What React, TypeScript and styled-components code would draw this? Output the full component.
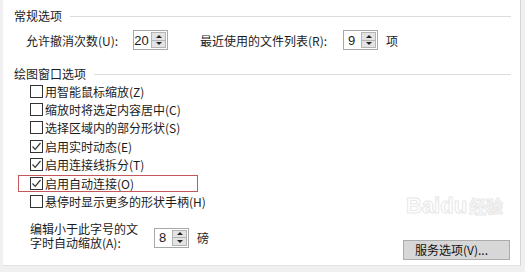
import { FC } from "react";
import styled, { createGlobalStyle } from "styled-components";

const GlobalStyle = createGlobalStyle`
	html, body {
		margin: 0;
		padding: 0;
		background: #f0f0f0;
	}
	body {
		font-family: "Noto Sans CJK SC", "Noto Sans", sans-serif;
		font-size: 12px;
		color: #1b1b1b;
	}
`;

const Page = styled.div`
	width: 525px;
	height: 272px;
	background: #f0f0f0;
	overflow: hidden;
	position: relative;
`;

const Panel = styled.div`
	margin-left: 3px;
	width: 518px;
	height: 266px;
	box-sizing: border-box;
	background: #fff;
	border-right: 1px solid #d5d5d5;
	border-bottom: 1px solid #e2e2e2;
	padding: 7px 9px 0 11px;
`;

const GroupHeader = styled.div<{ $top?: number }>`
	display: flex;
	align-items: center;
	height: 18px;
	margin-top: ${(p) => p.$top ?? 0}px;
	line-height: 18px;
	span {
		white-space: nowrap;
		padding-right: 8px;
	}
	&::after {
		content: "";
		flex: 1;
		height: 1px;
		background: #dcdcdc;
	}
`;

const SpinRow = styled.div`
	display: flex;
	align-items: center;
	height: 20px;
	margin-top: 5px;
	padding-left: 12px;
`;

const Label = styled.span<{ $width: number; $gap?: number }>`
	width: ${(p) => p.$width}px;
	margin-left: ${(p) => p.$gap ?? 0}px;
	white-space: nowrap;
`;

const Unit = styled.span`
	margin-left: 8px;
`;

const SpinBox = styled.div<{ $width?: number }>`
	display: flex;
	width: ${(p) => p.$width ?? 35}px;
	height: 20px;
	box-sizing: border-box;
	border: 1px solid #a8a8a8;
	background: #fff;
`;

const SpinValue = styled.div`
	flex: 1;
	display: flex;
	align-items: center;
	justify-content: center;
	font-family: "Liberation Sans", sans-serif;
	font-size: 13px;
	padding-right: 2px;
`;

const SpinButtons = styled.div`
	width: 13px;
	margin: 1px 1px 1px 0;
	display: flex;
	flex-direction: column;
	border: 1px solid #b4b4b4;
	background: #e3e3e3;
`;

const SpinArrow = styled.div<{ $down?: boolean }>`
	flex: 1;
	display: flex;
	align-items: center;
	justify-content: center;
	border-top: ${(p) => (p.$down ? "1px solid #b4b4b4" : "none")};
	&::before {
		content: "";
		width: 0;
		height: 0;
		border-left: 3px solid transparent;
		border-right: 3px solid transparent;
		${(p) =>
			p.$down
				? "border-top: 3px solid #222;"
				: "border-bottom: 3px solid #222;"}
	}
`;

const CheckList = styled.div`
	display: flex;
	flex-direction: column;
	padding-left: 16px;
	margin-top: -1px;
`;

const CheckRow = styled.div<{ $highlight?: boolean }>`
	position: relative;
	display: flex;
	align-items: center;
	height: 18.4px;
	gap: 2px;
	white-space: nowrap;
	${(p) =>
		p.$highlight &&
		`
		&::after {
			content: "";
			position: absolute;
			left: -12px;
			top: 1px;
			width: 178px;
			height: 15px;
			border: 1px solid #c4565c;
		}
	`}
`;

const Box = styled.span`
	width: 13px;
	height: 13px;
	box-sizing: border-box;
	border: 1px solid #333;
	background: #fff;
	display: flex;
	align-items: center;
	justify-content: center;
`;

const SizeRow = styled.div`
	display: flex;
	align-items: center;
	padding-left: 16px;
	margin-top: 15px;
`;

const TwoLine = styled.div`
	width: 124px;
	line-height: 14px;
	margin-top: -4px;
`;

const ButtonRow = styled.div`
	display: flex;
	justify-content: flex-end;
	margin-top: -10px;
	padding-right: 1px;
`;

const Button = styled.div`
	width: 107px;
	height: 20px;
	box-sizing: border-box;
	border: 1px solid #acacac;
	background: #d7d7d7;
	display: flex;
	align-items: center;
	padding-left: 11px;
	white-space: nowrap;
	color: #111;
`;

const Watermark = styled.div`
	position: absolute;
	left: 406px;
	top: 194px;
	font-family: "Liberation Sans", sans-serif;
	font-size: 22px;
	line-height: 24px;
	font-weight: bold;
	color: #fff;
	-webkit-text-stroke: 1px #e8e8e8;
	white-space: nowrap;
	pointer-events: none;
	span {
		font-family: "Noto Sans CJK SC", sans-serif;
		font-size: 17px;
		margin-left: 2px;
	}
`;

const Spin: FC<{ value: string }> = ({ value }) => (
	<SpinBox>
		<SpinValue>{value}</SpinValue>
		<SpinButtons>
			<SpinArrow />
			<SpinArrow $down />
		</SpinButtons>
	</SpinBox>
);

const Check: FC<{ checked?: boolean }> = ({ checked }) => (
	<Box>
		{checked && (
			<svg width="11" height="11" viewBox="0 0 11 11">
				<path d="M1.5 5.5 L4.2 8.3 L9.5 2" fill="none" stroke="#333" strokeWidth="1.2" />
			</svg>
		)}
	</Box>
);

const options = [
	{ text: "用智能鼠标缩放(Z)", checked: false },
	{ text: "缩放时将选定内容居中(C)", checked: false },
	{ text: "选择区域内的部分形状(S)", checked: false },
	{ text: "启用实时动态(E)", checked: true },
	{ text: "启用连接线拆分(T)", checked: true },
	{ text: "启用自动连接(O)", checked: true, highlight: true },
	{ text: "悬停时显示更多的形状手柄(H)", checked: false },
];

const App: FC = () => (
	<>
		<GlobalStyle />
		<Page>
			<Panel>
				<GroupHeader>
					<span>常规选项</span>
				</GroupHeader>
				<SpinRow>
					<Label $width={107}>允许撤消次数(U):</Label>
					<Spin value="20" />
					<Label $width={143} $gap={32}>
						最近使用的文件列表(R):
					</Label>
					<Spin value="9" />
					<Unit>项</Unit>
				</SpinRow>
				<GroupHeader $top={15}>
					<span>绘图窗口选项</span>
				</GroupHeader>
				<CheckList>
					{options.map((o) => (
						<CheckRow key={o.text} $highlight={o.highlight}>
							<Check checked={o.checked} />
							{o.text}
						</CheckRow>
					))}
				</CheckList>
				<SizeRow>
					<TwoLine>
						编辑小于此字号的文
						<br />
						字时自动缩放(A):
					</TwoLine>
					<Spin value="8" />
					<Unit>磅</Unit>
				</SizeRow>
				<ButtonRow>
					<Button>服务选项(V)...</Button>
				</ButtonRow>
			</Panel>
			<Watermark>
				Baidu<span>经验</span>
			</Watermark>
		</Page>
	</>
);

export default App;
